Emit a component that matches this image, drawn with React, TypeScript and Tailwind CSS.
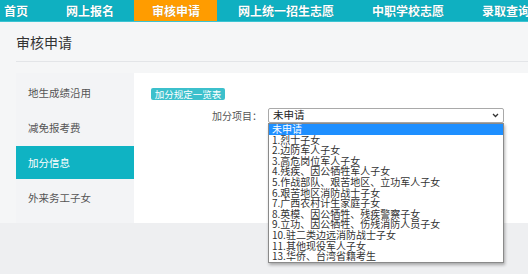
import React from "react";

const navItems = ["首页", "网上报名", "审核申请", "网上统一招生志愿", "中职学校志愿", "录取查询"];
const menu = ["地生成绩沿用", "减免报考费", "加分信息", "外来务工子女"];
const options = [
  "未申请",
  "1.烈士子女",
  "2.边防军人子女",
  "3.高危岗位军人子女",
  "4.残疾、因公牺牲军人子女",
  "5.作战部队、艰苦地区、立功军人子女",
  "6.艰苦地区消防战士子女",
  "7.广西农村计生家庭子女",
  "8.英模、因公牺牲、残疾警察子女",
  "9.立功、因公牺牲、伤残消防人员子女",
  "10.驻二类边远消防战士子女",
  "11.其他现役军人子女",
  "13.华侨、台湾省籍考生",
];

const font = { fontFamily: '"Noto Sans CJK SC", "Noto Sans", sans-serif' };

export default function App() {
  return (
    <div className="w-[528px] h-[274px] overflow-hidden bg-[#eeeff1]" style={font}>
      <div className="h-[22px] bg-[#0fb0c1] border-b border-[#3cc4d2] flex items-stretch gap-[3px] overflow-hidden whitespace-nowrap">
        {navItems.map((t, i) => (
          <div
            key={t}
            className={`${i === 0 ? "pl-[4px]" : "pl-[18px]"} pr-[17px] flex items-center text-[12px] font-bold text-white leading-none ${i === 2 ? "bg-[#ff9c00]" : ""}`}
            style={{ textShadow: "0 0 1px rgba(0,0,0,0.25)" }}
          >
            {t}
          </div>
        ))}
      </div>
      <div className="bg-[#f5f6f7] pl-[16px]">
        <div className="h-[40px] border-b border-[#e3e5e8] flex items-center text-[14px] text-[#333] pt-[1px]">
          审核申请
        </div>
        <div className="mt-[11px] h-[150px] flex">
          <div className="w-[118px] bg-[#f3f4f6] pt-[3px] flex flex-col gap-[2px]">
            {menu.map((m, i) => (
              <div
                key={m}
                className={`h-[33px] flex items-center pl-[12px] text-[10.5px] ${i === 2 ? "bg-[#0fb3c3] text-white" : "text-[#555]"}`}
              >
                {m}
              </div>
            ))}
          </div>
          <div className="flex-1 bg-white pt-[15px] pl-[17px]">
            <div className="w-[74px] h-[12px] rounded-[2px] bg-[#3cc0cc] text-white text-[9.5px] leading-[12px] flex items-center justify-center whitespace-nowrap">
              加分规定一览表
            </div>
            <div className="mt-[8px] flex items-center gap-[6px]">
              <div className="w-[111px] text-right text-[10px] text-[#555]">加分项目：</div>
              <div className="relative">
                <div className="w-[236px] h-[15px] border border-[#a9a9a9] rounded-[2px] flex items-center justify-between pl-[4px] pr-[4px] text-[10.5px] text-[#222] leading-none">
                  <span>未申请</span>
                  <svg width="7" height="5" viewBox="0 0 7 5">
                    <path d="M1 1 L3.5 3.5 L6 1" stroke="#333" strokeWidth="1.3" fill="none" />
                  </svg>
                </div>
                <div className="absolute left-0 top-[15px] w-[236px] bg-white border border-[#8a8a8a] shadow-[1px_2px_3px_rgba(0,0,0,0.3)] z-10">
                  {options.map((o, i) => (
                    <div
                      key={o}
                      className={`leading-[10.6px] text-[10px] pl-[3px] whitespace-nowrap ${i === 0 ? "bg-[#1e8fff] text-white" : "text-[#333]"}`}
                    >
                      {o}
                    </div>
                  ))}
                </div>
              </div>
            </div>
          </div>
        </div>
      </div>
    </div>
  );
}
